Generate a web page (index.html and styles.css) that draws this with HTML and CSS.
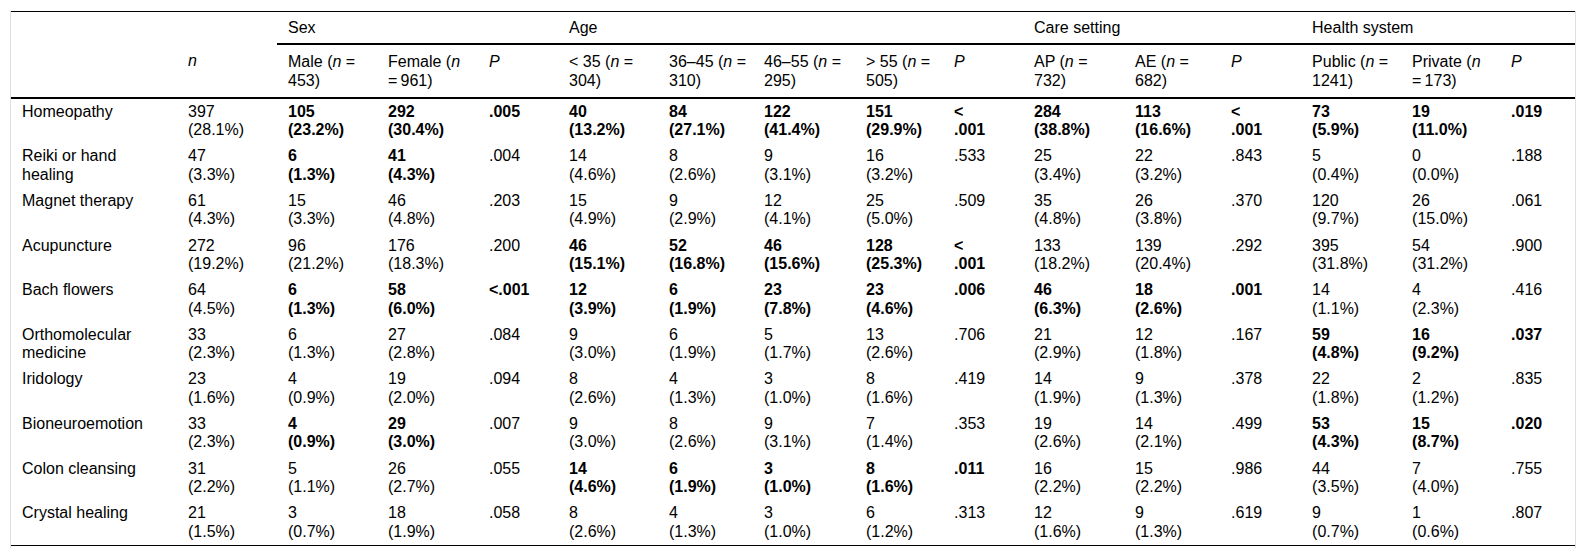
FILE: index.html
```html
<!DOCTYPE html>
<html lang="en">
<head>
<meta charset="utf-8">
<title>Table</title>
<link rel="stylesheet" href="styles.css">
</head>
<body>
<div class="wrap">
<table class="tbl">
<colgroup>
<col class="w166"><col class="w100"><col class="w100"><col class="w101"><col class="w80"><col class="w100"><col class="w95"><col class="w102"><col class="w88"><col class="w80"><col class="w101"><col class="w96"><col class="w81"><col class="w100"><col class="w99"><col class="w75">
</colgroup>
<thead>
<tr class="grp">
<th></th><th></th>
<th class="g" colspan="3">Sex</th>
<th class="g" colspan="5">Age</th>
<th class="g" colspan="3">Care setting</th>
<th class="g" colspan="3">Health system</th>
</tr>
<tr class="sub">
<th></th>
<th><i>n</i></th>
<th>Male (<i>n</i> =<br>453)</th>
<th>Female (<i>n</i><br>=&#8201;961)</th>
<th><i>P</i></th>
<th>&lt; 35 (<i>n</i> =<br>304)</th>
<th>36–45 (<i>n</i> =<br>310)</th>
<th>46–55 (<i>n</i> =<br>295)</th>
<th>&gt; 55 (<i>n</i> =<br>505)</th>
<th><i>P</i></th>
<th>AP (<i>n</i> =<br>732)</th>
<th>AE (<i>n</i> =<br>682)</th>
<th><i>P</i></th>
<th>Public (<i>n</i> =<br>1241)</th>
<th>Private (<i>n</i><br>=&#8201;173)</th>
<th><i>P</i></th>
</tr>
</thead>
<tbody>
<tr>
<td>Homeopathy</td><td>397<br>(28.1%)</td>
<td class="b">105<br>(23.2%)</td><td class="b">292<br>(30.4%)</td><td class="b">.005</td>
<td class="b">40<br>(13.2%)</td><td class="b">84<br>(27.1%)</td><td class="b">122<br>(41.4%)</td><td class="b">151<br>(29.9%)</td><td class="b">&lt;<br>.001</td>
<td class="b">284<br>(38.8%)</td><td class="b">113<br>(16.6%)</td><td class="b">&lt;<br>.001</td>
<td class="b">73<br>(5.9%)</td><td class="b">19<br>(11.0%)</td><td class="b">.019</td>
</tr>
<tr>
<td>Reiki or hand<br>healing</td><td>47<br>(3.3%)</td>
<td class="b">6<br>(1.3%)</td><td class="b">41<br>(4.3%)</td><td>.004</td>
<td>14<br>(4.6%)</td><td>8<br>(2.6%)</td><td>9<br>(3.1%)</td><td>16<br>(3.2%)</td><td>.533</td>
<td>25<br>(3.4%)</td><td>22<br>(3.2%)</td><td>.843</td>
<td>5<br>(0.4%)</td><td>0<br>(0.0%)</td><td>.188</td>
</tr>
<tr>
<td>Magnet therapy</td><td>61<br>(4.3%)</td>
<td>15<br>(3.3%)</td><td>46<br>(4.8%)</td><td>.203</td>
<td>15<br>(4.9%)</td><td>9<br>(2.9%)</td><td>12<br>(4.1%)</td><td>25<br>(5.0%)</td><td>.509</td>
<td>35<br>(4.8%)</td><td>26<br>(3.8%)</td><td>.370</td>
<td>120<br>(9.7%)</td><td>26<br>(15.0%)</td><td>.061</td>
</tr>
<tr>
<td>Acupuncture</td><td>272<br>(19.2%)</td>
<td>96<br>(21.2%)</td><td>176<br>(18.3%)</td><td>.200</td>
<td class="b">46<br>(15.1%)</td><td class="b">52<br>(16.8%)</td><td class="b">46<br>(15.6%)</td><td class="b">128<br>(25.3%)</td><td class="b">&lt;<br>.001</td>
<td>133<br>(18.2%)</td><td>139<br>(20.4%)</td><td>.292</td>
<td>395<br>(31.8%)</td><td>54<br>(31.2%)</td><td>.900</td>
</tr>
<tr>
<td>Bach flowers</td><td>64<br>(4.5%)</td>
<td class="b">6<br>(1.3%)</td><td class="b">58<br>(6.0%)</td><td class="b">&lt;.001</td>
<td class="b">12<br>(3.9%)</td><td class="b">6<br>(1.9%)</td><td class="b">23<br>(7.8%)</td><td class="b">23<br>(4.6%)</td><td class="b">.006</td>
<td class="b">46<br>(6.3%)</td><td class="b">18<br>(2.6%)</td><td class="b">.001</td>
<td>14<br>(1.1%)</td><td>4<br>(2.3%)</td><td>.416</td>
</tr>
<tr>
<td>Orthomolecular<br>medicine</td><td>33<br>(2.3%)</td>
<td>6<br>(1.3%)</td><td>27<br>(2.8%)</td><td>.084</td>
<td>9<br>(3.0%)</td><td>6<br>(1.9%)</td><td>5<br>(1.7%)</td><td>13<br>(2.6%)</td><td>.706</td>
<td>21<br>(2.9%)</td><td>12<br>(1.8%)</td><td>.167</td>
<td class="b">59<br>(4.8%)</td><td class="b">16<br>(9.2%)</td><td class="b">.037</td>
</tr>
<tr>
<td>Iridology</td><td>23<br>(1.6%)</td>
<td>4<br>(0.9%)</td><td>19<br>(2.0%)</td><td>.094</td>
<td>8<br>(2.6%)</td><td>4<br>(1.3%)</td><td>3<br>(1.0%)</td><td>8<br>(1.6%)</td><td>.419</td>
<td>14<br>(1.9%)</td><td>9<br>(1.3%)</td><td>.378</td>
<td>22<br>(1.8%)</td><td>2<br>(1.2%)</td><td>.835</td>
</tr>
<tr>
<td>Bioneuroemotion</td><td>33<br>(2.3%)</td>
<td class="b">4<br>(0.9%)</td><td class="b">29<br>(3.0%)</td><td>.007</td>
<td>9<br>(3.0%)</td><td>8<br>(2.6%)</td><td>9<br>(3.1%)</td><td>7<br>(1.4%)</td><td>.353</td>
<td>19<br>(2.6%)</td><td>14<br>(2.1%)</td><td>.499</td>
<td class="b">53<br>(4.3%)</td><td class="b">15<br>(8.7%)</td><td class="b">.020</td>
</tr>
<tr>
<td>Colon cleansing</td><td>31<br>(2.2%)</td>
<td>5<br>(1.1%)</td><td>26<br>(2.7%)</td><td>.055</td>
<td class="b">14<br>(4.6%)</td><td class="b">6<br>(1.9%)</td><td class="b">3<br>(1.0%)</td><td class="b">8<br>(1.6%)</td><td class="b">.011</td>
<td>16<br>(2.2%)</td><td>15<br>(2.2%)</td><td>.986</td>
<td>44<br>(3.5%)</td><td>7<br>(4.0%)</td><td>.755</td>
</tr>
<tr>
<td>Crystal healing</td><td>21<br>(1.5%)</td>
<td>3<br>(0.7%)</td><td>18<br>(1.9%)</td><td>.058</td>
<td>8<br>(2.6%)</td><td>4<br>(1.3%)</td><td>3<br>(1.0%)</td><td>6<br>(1.2%)</td><td>.313</td>
<td>12<br>(1.6%)</td><td>9<br>(1.3%)</td><td>.619</td>
<td>9<br>(0.7%)</td><td>1<br>(0.6%)</td><td>.807</td>
</tr>
</tbody>
</table>
</div>
</body>
</html>
```
FILE: styles.css
```css
html, body {
  margin: 0;
  padding: 0;
  background: #ffffff;
}
body {
  font-family: "Liberation Sans", Arial, Helvetica, sans-serif;
  font-size: 16px;
  color: #000000;
}
.wrap {
  margin: 11px 10px 0 10px;
  border-left: 1px solid #dedede;
  border-right: 1px solid #dedede;
  padding-bottom: 2px;
}
.tbl {
  width: 100%;
  border-collapse: collapse;
  table-layout: fixed;
  border-top: 1px solid #000;
  border-bottom: 1px solid #000;
  line-height: 18.3px;
}
.w166 { width: 166px; }
.w100 { width: 100px; }
.w101 { width: 101px; }
.w80 { width: 80px; }
.w95 { width: 95px; }
.w102 { width: 102px; }
.w88 { width: 88px; }
.w96 { width: 96px; }
.w81 { width: 81px; }
.w99 { width: 99px; }
.w75 { width: 75px; }
.tbl th {
  font-weight: normal;
  text-align: left;
  vertical-align: top;
  white-space: nowrap;
  padding: 7px 11px 6px 11px;
}
.grp .g {
  border-bottom: 2px solid #000;
}
.sub th {
  padding: 8px 11px 7px 11px;
}
.sub {
  border-bottom: 2px solid #000;
}
.tbl td {
  vertical-align: top;
  text-align: left;
  white-space: nowrap;
  padding: 4px 11px 4px 11px;
}
.tbl td.b {
  font-weight: bold;
}
```
